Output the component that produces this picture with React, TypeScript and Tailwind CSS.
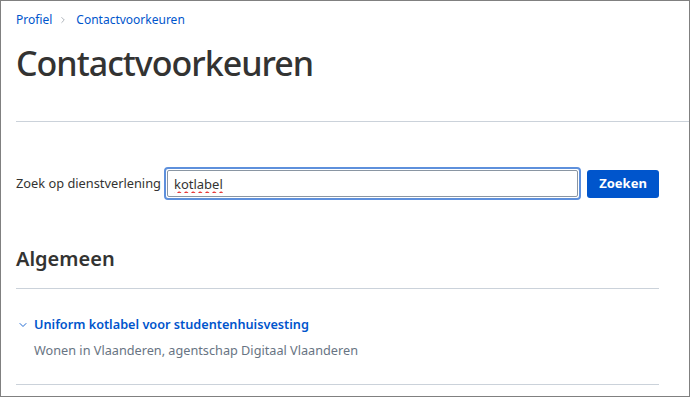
import { ChevronDown, ChevronRight } from "lucide-react";

export default function App() {
  return (
    <div
      className="w-[690px] h-[397px] overflow-hidden border border-[#808080] bg-white text-[#333332]"
      style={{ fontFamily: '"Noto Sans", "Open Sans", sans-serif' }}
    >
      <header className="pl-[15px] pt-[10px]">
        <nav className="flex items-center h-[18px] text-[12px] text-[#0055cc]">
          <span>Profiel</span>
          <ChevronRight className="w-[10px] h-[10px] ml-[6px] mr-[8px] text-[#a0a6ae]" strokeWidth={2} />
          <span>Contactvoorkeuren</span>
        </nav>
        <h1 className="mt-[16px] text-[34px] leading-[36px] font-medium tracking-[-1px] text-[#333332]">
          Contactvoorkeuren
        </h1>
        <div className="mt-[40px] h-px bg-[#cbd2da]" />
      </header>

      <main className="pl-[15px] pr-[30px]">
        <form className="mt-[45px] flex items-center" onSubmit={(e) => e.preventDefault()}>
          <label className="text-[12.8px] text-[#333332] mr-[3px]">Zoek op dienstverlening</label>
          <div className="flex-1 h-[33px] rounded-[4px] border-2 border-[#5e90dc] p-px">
            <input
              className="w-full h-full rounded-[2px] border border-[#8a96a3] px-[6px] text-[13px] text-[#333332] outline-none underline decoration-wavy decoration-[#e52a2a] underline-offset-2"
              defaultValue="kotlabel"
            />
          </div>
          <button
            type="submit"
            className="ml-[6px] w-[72px] h-[28px] rounded-[3px] bg-[#0055cc] text-white text-[13px] font-bold"
          >
            Zoeken
          </button>
        </form>

        <h2 className="mt-[46px] text-[20px] leading-[26px] font-semibold text-[#333332]">Algemeen</h2>
        <div className="mt-[16px] h-px bg-[#cbd2da]" />

        <div className="pt-[26px] pb-[24px]">
          <div className="flex items-center text-[#0055cc]">
            <ChevronDown className="w-[12px] h-[12px] ml-[1px] mr-[5px]" strokeWidth={1.75} />
            <span className="text-[12.7px] font-semibold">Uniform kotlabel voor studentenhuisvesting</span>
          </div>
          <div className="mt-[7px] pl-[18px] text-[12.7px] text-[#687483]">
            Wonen in Vlaanderen, agentschap Digitaal Vlaanderen
          </div>
        </div>
        <div className="h-px bg-[#cbd2da]" />
      </main>
    </div>
  );
}
